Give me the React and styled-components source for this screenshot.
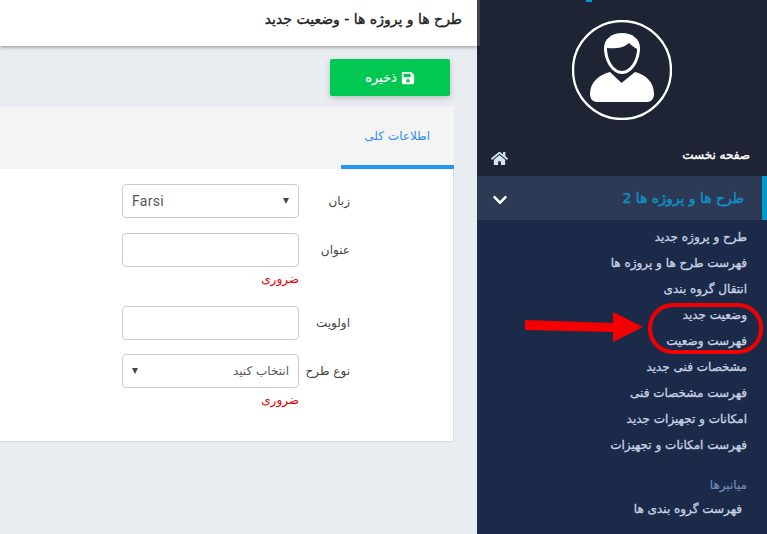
import React from 'react';
import styled, { createGlobalStyle } from 'styled-components';
import { FaHome, FaChevronDown, FaSave } from 'react-icons/fa';

const Global = createGlobalStyle`
  html, body { margin: 0; padding: 0; height: 100%; overflow: hidden; }
  body { font-family: "DejaVu Sans", sans-serif; direction: rtl; background: #e9ecf1; }
  * { box-sizing: border-box; }
`;
const Page = styled.div`position: relative; display: flex; width: 767px; height: 534px; overflow: hidden; background: #e9ecf1;`;
const Sidebar = styled.aside`width: 290px; flex: none; background: #1c2a4a; display: flex; flex-direction: column;`;
const SideTop = styled.div`background: #1e2433; height: 176px; display: flex; flex-direction: column; position: relative;`;
const TopMark = styled.span`position: absolute; top: 0; left: 109px; width: 6px; height: 2px; background: #0099cc;`;
const AvatarWrap = styled.div`height: 132px; padding-top: 20px; display: flex; justify-content: center;`;
const HomeRow = styled.div`flex: 1; display: flex; align-items: center; justify-content: space-between; padding: 2px 17px 0 14px; color: #fff; font-size: 12px; -webkit-text-stroke: .4px #fff;`;
const HomeIcon = styled(FaHome)`width: 17px; height: 17px; color: #d5e3f5; margin-top: 6px;`;
const ActiveRow = styled.div`height: 44px; background: #2d3a55; border-right: 5px solid #0099cc; display: flex; align-items: center; justify-content: space-between; padding: 0 18px 0 15px; color: #0f8fc8; font-size: 14px; -webkit-text-stroke: .4px #0f8fc8;`;
const Chev = styled(FaChevronDown)`width: 16px; height: 16px; color: #fff; margin-top: 3px;`;
const SubList = styled.ul`list-style: none; margin: 0; padding: 4px 20px 0 0;`;
const SubItem = styled.li`height: 26px; line-height: 26px; font-size: 12px; color: #c9d3e4; -webkit-text-stroke: .3px #c9d3e4; white-space: nowrap;`;
const SubHead = styled.div`margin-top: 14px; padding-right: 20px; height: 26px; line-height: 26px; font-size: 12px; color: #6f8bb5; -webkit-text-stroke: .2px #6f8bb5;`;
const SubLast = styled.div`padding-right: 25px; height: 22px; line-height: 22px; font-size: 12px; color: #c9d3e4; -webkit-text-stroke: .3px #c9d3e4;`;

const Main = styled.main`flex: 1; min-width: 0; position: relative;`;
const Strip = styled.span`position: absolute; top: 0; right: -3px; width: 3px; height: 46px; background: #3f444f;`;
const Header = styled.header`height: 46px; background: #fff; box-shadow: 0 1px 4px rgba(0,0,0,.4); padding: 0 15px 8px 0; display: flex; align-items: center; font-size: 14px; color: #222; -webkit-text-stroke: .35px #222;`;
const Actions = styled.div`padding: 13px 27px 11px 0; display: flex;`;
const SaveBtn = styled.button`width: 120px; height: 37px; border: 0; border-radius: 2px; background: #00c853; color: #fff; font: 13px "DejaVu Sans", sans-serif; -webkit-text-stroke: .2px #fff; display: flex; align-items: center; justify-content: center; gap: 4px; box-shadow: 0 2px 6px rgba(0,0,0,.2);`;
const Card = styled.section`width: 454px; margin-right: 23px; background: #fff; border-bottom: 1px solid #ddd; border-right: 1px solid #ddd; height: 335px;`;
const Tabs = styled.div`height: 62px; background: #f4f4f4; display: flex; margin-right: -1px;`;
const Tab = styled.div`width: 113px; height: 62px; border-bottom: 4px solid #2196f3; color: #2f8fee; font-size: 12px; padding: 22px 24px 0 0;`;
const Form = styled.div`padding-top: 15px;`;
const Row = styled.div`display: flex; align-items: flex-start; margin-bottom: ${p => p.$mb}px;`;
const Label = styled.label`width: 154px; padding-right: 103px; white-space: nowrap; font-size: 12px; color: #444; line-height: 34px; flex: none;`;
const Field = styled.div`width: 177px;`;
const Box = styled.div`height: 34px; border: 1px solid #ccc; border-radius: 4px; background: #fff; display: flex; align-items: center; justify-content: space-between; padding: 0 9px; font-size: 12px; color: #555;`;
const Latin = styled.span`font: 14px Roboto, sans-serif; letter-spacing: .3px; color: #555;`;
const Caret = styled.span`width: 0; height: 0; border-left: 3px solid transparent; border-right: 3px solid transparent; border-top: 6px solid #444;`;
const Err = styled.div`color: #e00000; font-size: 12px; line-height: 24px; height: 22px;`;
const Overlay = styled.svg`position: absolute; left: 500px; top: 290px; width: 267px; height: 90px; pointer-events: none;`;

const Avatar = () => (
  <svg width="100" height="100" viewBox="0 0 100 100">
    <circle cx="50" cy="50" r="49" fill="none" stroke="#fff" strokeWidth="2.4" />
    <path d="M50 13C40 13 32 19 32 28 32 41 40 54 50 54S68 41 68 28C68 19 60 13 50 13Z" fill="#fff" />
    <path d="M35 28C42 29 52 28 57 23 60 26 63 28 65 29 65 40 58 51 50 51 42 51 35 40 35 28Z" fill="#1e2433" />
    <path d="M38 52L49.5 63 63 52C74 55 82 62 82 74 82 79 79 82 75 82H25C21 82 18 79 18 74 18 62 27 55 38 52Z" fill="#fff" />
  </svg>
);

const items = ['طرح و پروژه جدید','فهرست طرح ها و پروژه ها','انتقال گروه بندی','وضعیت جدید','فهرست وضعیت','مشخصات فنی جدید','فهرست مشخصات فنی','امکانات و تجهیزات جدید','فهرست امکانات و تجهیزات'];

export default function App() {
  return (
    <Page>
      <Global />
      <Sidebar>
        <SideTop>
          <TopMark />
          <AvatarWrap><Avatar /></AvatarWrap>
          <HomeRow><span>صفحه نخست</span><HomeIcon /></HomeRow>
        </SideTop>
        <ActiveRow><span>طرح ها و پروژه ها 2</span><Chev /></ActiveRow>
        <SubList>{items.map(t => <SubItem key={t}>{t}</SubItem>)}</SubList>
        <SubHead>میانبرها</SubHead>
        <SubLast>فهرست گروه بندی ها</SubLast>
      </Sidebar>
      <Main>
        <Strip />
        <Header>طرح ها و پروژه ها - وضعیت جدید</Header>
        <Actions><SaveBtn><FaSave size={14} /><span>ذخیره</span></SaveBtn></Actions>
        <Card>
          <Tabs><Tab>اطلاعات کلی</Tab></Tabs>
          <Form>
            <Row $mb={15}><Label>زبان</Label><Field><Box><Caret /><Latin>Farsi</Latin></Box></Field></Row>
            <Row $mb={17}><Label>عنوان</Label><Field><Box /><Err>ضروری</Err></Field></Row>
            <Row $mb={14}><Label>اولویت</Label><Field><Box /></Field></Row>
            <Row $mb={0}><Label>نوع طرح</Label><Field><Box><span>انتخاب کنید</span><Caret /></Box><Err>ضروری</Err></Field></Row>
          </Form>
        </Card>
      </Main>
      <Overlay viewBox="0 0 267 90">
        <polygon points="25,30 113,33 113,22 143,37 113,52 113,42 25,40" fill="#f50000" />
        <rect x="150" y="15" width="111" height="47" rx="23" fill="none" stroke="#f00000" strokeWidth="4" />
      </Overlay>
    </Page>
  );
}
